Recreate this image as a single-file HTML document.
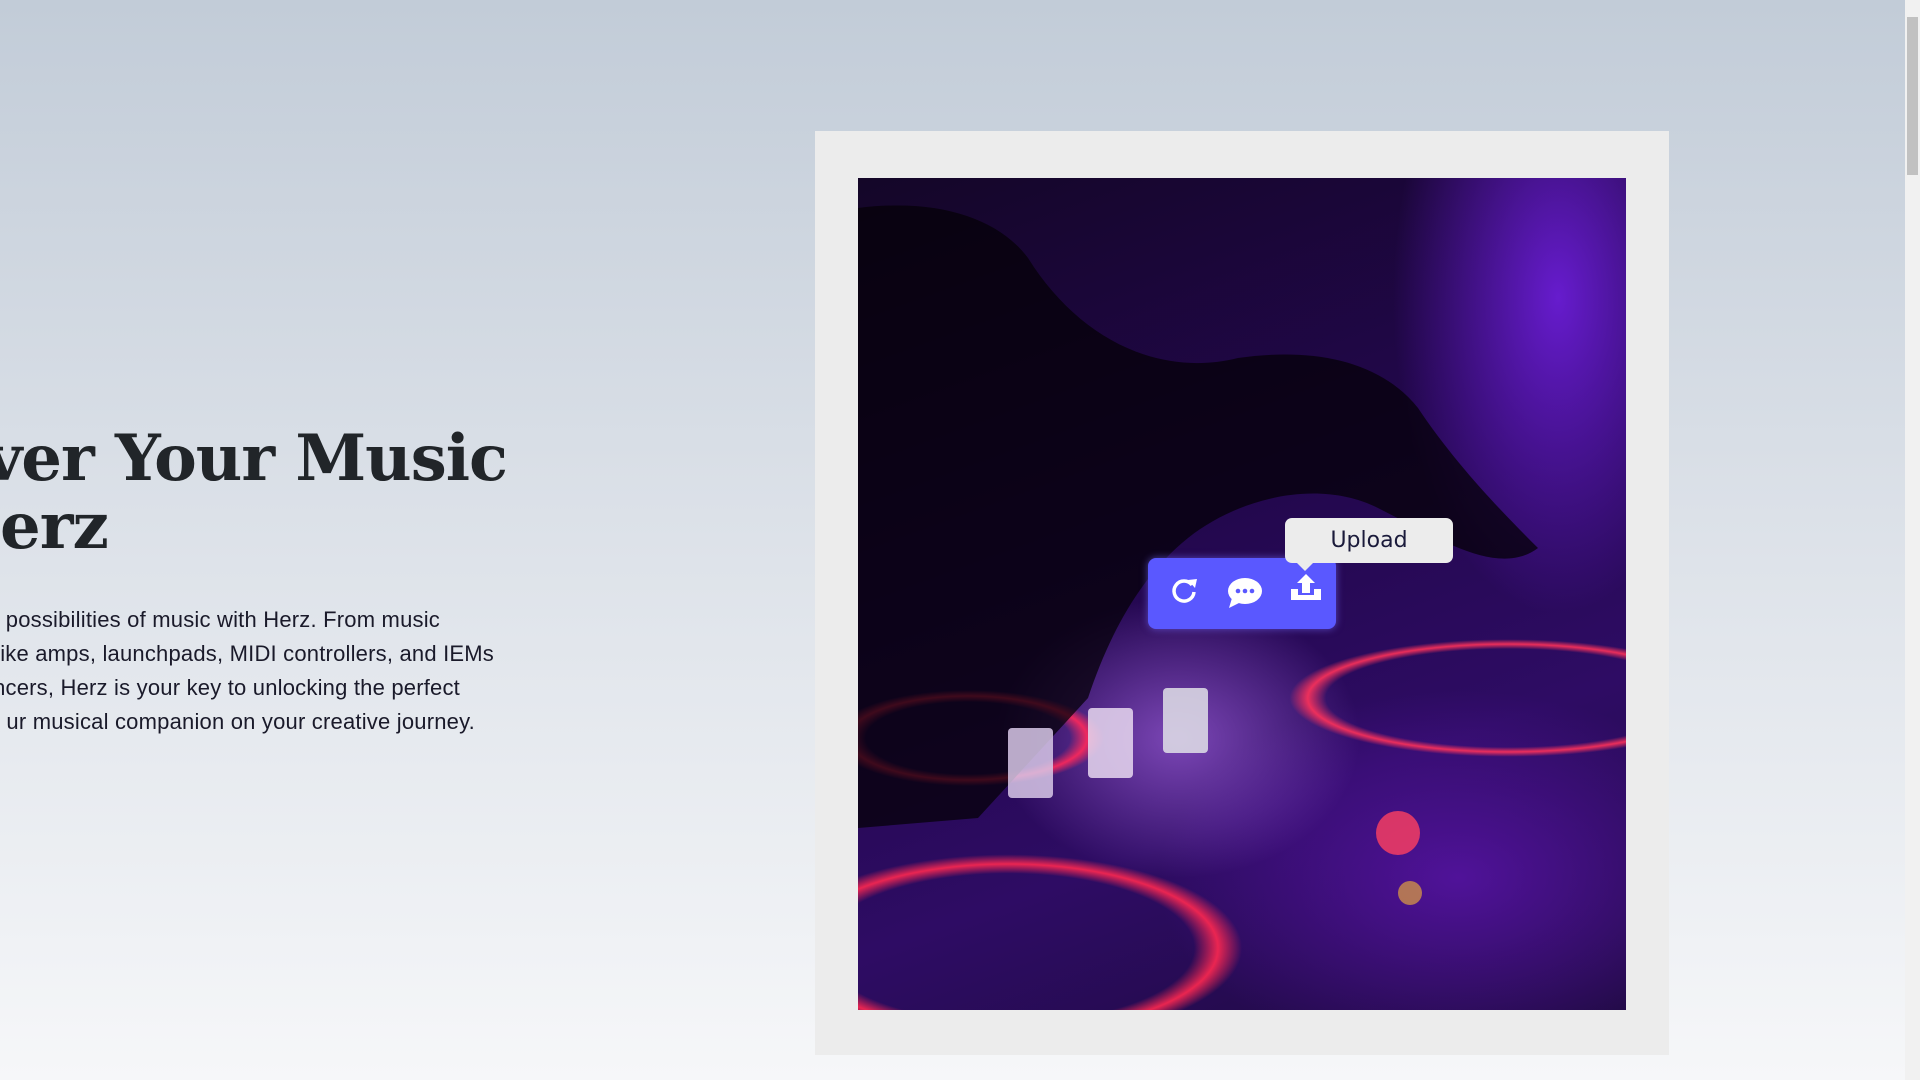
<!DOCTYPE html>
<html><head><style>
html,body{margin:0;padding:0;width:1920px;height:1080px;overflow:hidden}
body{background:linear-gradient(180deg,#c2ccd8 0%,#dde2e9 50%,#f6f7f9 100%);position:relative;font-family:"Liberation Sans",sans-serif}
.l{position:absolute;white-space:nowrap;color:#212529}
.h{font-family:"DejaVu Serif",serif;font-weight:bold;font-size:64px;line-height:75px;letter-spacing:-1px}
.p{font-size:22px;line-height:26px;color:#1a1a2a;letter-spacing:0.2px}
.card{position:absolute;left:815px;top:131px;width:854px;height:924px;background:#ececec}
.img{position:absolute;left:858px;top:178px;width:768px;height:832px;overflow:hidden;
background:
radial-gradient(ellipse 170px 60px at 110px 560px,rgba(255,50,90,.0) 60%,rgba(255,40,90,.9) 70%,rgba(255,40,90,0) 80%),
radial-gradient(ellipse 300px 120px at 150px 770px,rgba(0,0,0,0) 62%,rgba(255,40,80,.9) 70%,rgba(255,40,80,0) 78%),
radial-gradient(ellipse 260px 70px at 650px 520px,rgba(0,0,0,0) 70%,rgba(255,50,90,.9) 77%,rgba(255,50,90,0) 84%),
radial-gradient(ellipse 260px 200px at 320px 560px,rgba(190,120,255,.55),rgba(0,0,0,0) 70%),
radial-gradient(ellipse 220px 420px at 700px 120px,rgba(110,30,220,.9),rgba(0,0,0,0) 75%),
radial-gradient(ellipse 400px 250px at 600px 700px,rgba(90,20,170,.8),rgba(0,0,0,0) 75%),
linear-gradient(160deg,#140628 0%,#22074c 40%,#2e0c64 70%,#1e0a40 100%)}
.tb{position:absolute;left:1148px;top:558px;width:188px;height:71px;background:#5a58ff;border-radius:8px;box-shadow:0 0 8px rgba(120,110,255,.6)}
.tip{position:absolute;left:1285px;top:518px;width:168px;height:45px;background:#ececec;border-radius:7px;font-family:"DejaVu Sans",sans-serif;font-size:22px;line-height:45px;text-align:center;color:#1a1a3a}
.tip:after{content:"";position:absolute;left:12px;bottom:-8px;border:8px solid transparent;border-top-color:#ececec;border-bottom:0}
.sb{position:absolute;right:0;top:0;width:15px;height:1080px;background:#f1f1f1}
.th{position:absolute;right:2px;top:17px;width:11px;height:158px;background:#c1c1c1}
</style></head><body>
<div class="l h" style="right:1413px;top:421px">ver Your Music</div>
<div class="l h" style="left:0;top:489px">erz</div>
<div class="l p" style="right:1480px;top:607px">possibilities of music with Herz. From music</div>
<div class="l p" style="right:1426px;top:641px">ike amps, launchpads, MIDI controllers, and IEMs</div>
<div class="l p" style="right:1460px;top:675px">ncers, Herz is your key to unlocking the perfect</div>
<div class="l p" style="right:1445px;top:709px">ur musical companion on your creative journey.</div>
<div class="card"></div>
<div class="img">
<svg width="768" height="832" style="position:absolute;left:0;top:0">
<path d="M0 30 C80 20 140 40 170 80 C220 160 300 200 380 180 C450 170 520 180 560 230 C600 290 650 340 680 370 C640 400 580 360 520 330 C460 300 380 320 330 360 C280 400 250 460 230 520 L120 640 L0 650 Z" fill="#050208" opacity=".75"/>
<rect x="150" y="550" width="45" height="70" rx="4" fill="#d8c8e8" opacity=".85"/>
<rect x="230" y="530" width="45" height="70" rx="4" fill="#e8d8f0" opacity=".85"/>
<rect x="305" y="510" width="45" height="65" rx="4" fill="#e0e0e8" opacity=".85"/>
<circle cx="540" cy="655" r="22" fill="#ff4060" opacity=".8"/>
<circle cx="552" cy="715" r="12" fill="#e0a040" opacity=".7"/>
</svg>
</div>
<div class="tb">
<svg width="188" height="71" viewBox="0 0 188 71">
<g fill="none" stroke="#fff" stroke-width="3.5"><path d="M44 27 A10 10 0 1 0 46 34"/></g>
<path d="M40 22 L49 21 L47 30 Z" fill="#fff"/>
<ellipse cx="97" cy="33" rx="17" ry="13" fill="#fff"/><path d="M84 40 L81 50 L93 44 Z" fill="#fff"/>
<circle cx="90" cy="33" r="2.3" fill="#5a58ff"/><circle cx="97" cy="33" r="2.3" fill="#5a58ff"/><circle cx="104" cy="33" r="2.3" fill="#5a58ff"/>
<path d="M158 16 L167 25 L162 25 L162 35 L154 35 L154 25 L149 25 Z" fill="#fff"/>
<path d="M143 31 L150 31 L150 37 L166 37 L166 31 L173 31 L173 42 L143 42 Z" fill="#fff"/>
</svg>
</div>
<div class="tip">Upload</div>
<div class="sb"><div class="th"></div></div>
</body></html>
